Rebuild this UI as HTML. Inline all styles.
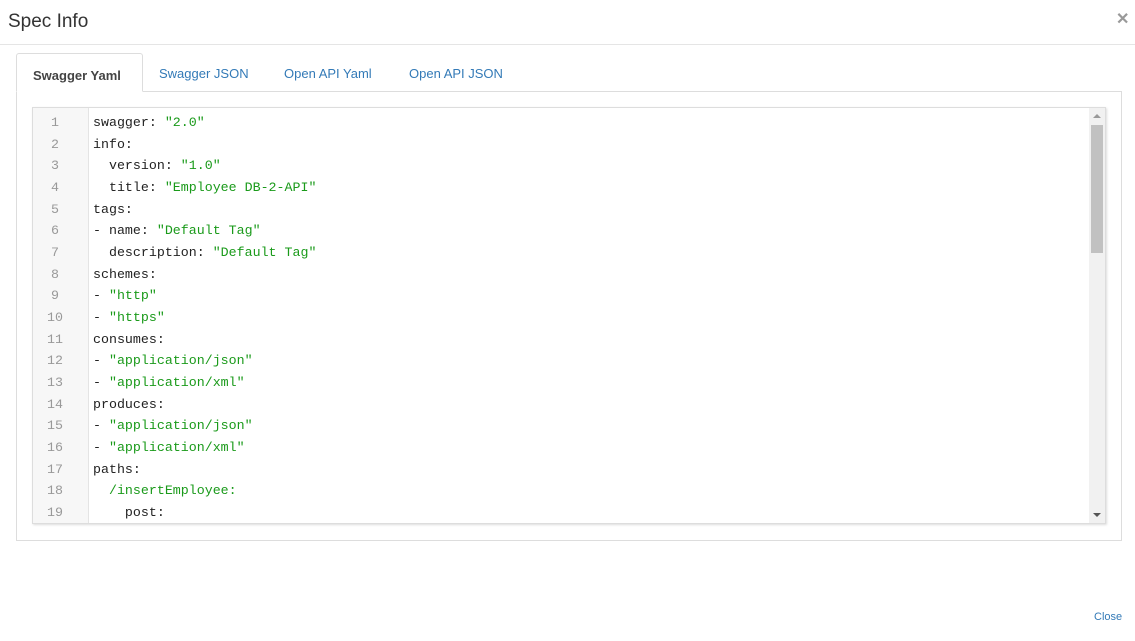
<!DOCTYPE html>
<html><head><meta charset="utf-8"><style>
*{margin:0;padding:0;box-sizing:border-box}
body{width:1135px;height:641px;background:#fff;position:relative;overflow:hidden;font-family:"Liberation Sans",sans-serif}
.title{position:absolute;left:8px;top:11px;font-size:19px;color:#333}
.x{position:absolute;left:1116px;top:9px;font-size:16px;color:#999;font-weight:bold}
.hr{position:absolute;left:0;top:44px;width:1135px;height:1px;background:#e5e5e5}
.panel{position:absolute;left:16px;top:91px;width:1106px;height:450px;border:1px solid #ddd}
.tab{position:absolute;top:66px;font-size:13px;color:#337ab7}
.active{position:absolute;left:16px;top:53px;width:127px;height:39px;border:1px solid #ddd;border-bottom:1px solid #fff;border-radius:3px 3px 0 0;background:#fff;font-weight:bold;color:#444;font-size:13px;padding:14px 0 0 16px}
.ed{position:absolute;left:32px;top:107px;width:1074px;height:417px;border:1px solid #ddd;overflow:hidden;box-shadow:1px 1px 2px #ddd}
.gut{position:absolute;left:0;top:0;width:56px;height:100%;background:#f7f7f7;border-right:1px solid #e4e4e4}
.code{position:absolute;left:0;top:4px;font-family:"Liberation Mono",monospace;font-size:13.3px;line-height:21.65px;white-space:pre;color:#222}
.ln{display:block}
.n{display:inline-block;width:56px;text-align:center;color:#999;padding-right:12px;margin-right:4px}
.s{color:#1a9a1a}
.sb{position:absolute;right:0;top:0;width:16px;height:100%;background:#f1f1f1}
.th{position:absolute;left:2px;top:17px;width:12px;height:128px;background:#c1c1c1}
.close{position:absolute;left:1094px;top:611px;font-size:11px;color:#337ab7}
</style></head><body>
<div class="title">Spec Info</div>
<div class="x">✕</div>
<div class="hr"></div>
<div class="panel"></div>
<div class="active">Swagger Yaml</div>
<div class="tab" style="left:159px">Swagger JSON</div>
<div class="tab" style="left:284px">Open API Yaml</div>
<div class="tab" style="left:409px">Open API JSON</div>
<div class="ed"><div class="gut"></div><div class="code"><span class="ln"><span class="n">1</span>swagger: <span class="s">"2.0"</span></span><span class="ln"><span class="n">2</span>info:</span><span class="ln"><span class="n">3</span>  version: <span class="s">"1.0"</span></span><span class="ln"><span class="n">4</span>  title: <span class="s">"Employee DB-2-API"</span></span><span class="ln"><span class="n">5</span>tags:</span><span class="ln"><span class="n">6</span>- name: <span class="s">"Default Tag"</span></span><span class="ln"><span class="n">7</span>  description: <span class="s">"Default Tag"</span></span><span class="ln"><span class="n">8</span>schemes:</span><span class="ln"><span class="n">9</span>- <span class="s">"http"</span></span><span class="ln"><span class="n">10</span>- <span class="s">"https"</span></span><span class="ln"><span class="n">11</span>consumes:</span><span class="ln"><span class="n">12</span>- <span class="s">"application/json"</span></span><span class="ln"><span class="n">13</span>- <span class="s">"application/xml"</span></span><span class="ln"><span class="n">14</span>produces:</span><span class="ln"><span class="n">15</span>- <span class="s">"application/json"</span></span><span class="ln"><span class="n">16</span>- <span class="s">"application/xml"</span></span><span class="ln"><span class="n">17</span>paths:</span><span class="ln"><span class="n">18</span>  <span class="s">/insertEmployee:</span></span><span class="ln"><span class="n">19</span>    post:</span></div>
<div class="sb"><div style="position:absolute;left:4px;top:6px;border:4px solid transparent;border-bottom:4px solid #999;border-top:0"></div><div class="th"></div><div style="position:absolute;left:4px;bottom:6px;border:4px solid transparent;border-top:4px solid #555;border-bottom:0"></div></div></div>
<div class="close">Close</div>
</body></html>
